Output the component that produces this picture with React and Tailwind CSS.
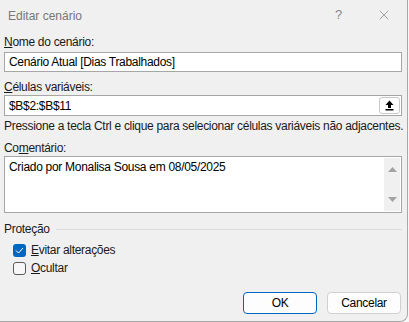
import { X } from 'lucide-react';

const font = { fontFamily: '"Liberation Sans", Arial, sans-serif' };

function Label({ children }) {
  return <div className="h-[16px] leading-[16px] text-[12px] text-[#1a1a1a]">{children}</div>;
}

export default function App() {
  return (
    <div className="w-[409px] h-[322px] bg-[#f7f7f7] overflow-hidden tracking-[-0.3px]" style={font}>
      <div className="w-[408px] h-[322px] bg-[#f0f0f0] border-r border-b border-[#a8a8a8] rounded-br-[8px] flex flex-col">
        {/* title bar */}
        <div className="h-[30px] flex items-center pl-[8px] shrink-0">
          <span className="text-[12px] text-[#777777] flex-1 pt-[1px] tracking-normal">Editar cenário</span>
          <span className="text-[13px] text-[#888888] w-[10px] mr-[31px] font-light">?</span>
          <X size={16} strokeWidth={1} className="text-[#777777] mr-[15px]" />
        </div>

        <div className="px-[4px] pr-[5px] flex flex-col">
          <div className="mt-[4px]">
            <Label><u>N</u>ome do cenário:</Label>
          </div>
          <div className="mt-[2px] h-[20px] bg-white border border-[#a6a6a6] flex items-center px-[4px] text-[12px] text-black">
            Cenário Atual [Dias Trabalhados]
          </div>

          <div className="mt-[7px]">
            <Label><u>C</u>élulas variáveis:</Label>
          </div>
          <div className="h-[21px] bg-white border border-[#a6a6a6] flex items-center pl-[4px] text-[12px] text-black">
            <span className="flex-1">$B$2:$B$11</span>
            <div className="w-[21px] h-[17px] mr-[1px] border border-[#c8c8c8] rounded-[3px] bg-white flex items-center justify-center">
              <svg width="9" height="11" viewBox="0 0 9 11">
                <path d="M4.5 0.5 L8.5 5 L6 5 L6 8 L3 8 L3 5 L0.5 5 Z" fill="#000" />
                <rect x="0.5" y="9" width="8" height="1.5" fill="#000" />
              </svg>
            </div>
          </div>

          <div className="mt-[2px] h-[16px] leading-[16px] text-[12px] text-[#1a1a1a] whitespace-nowrap">
            Pressione a tecla Ctrl e clique para selecionar células variáveis não adjacentes.
          </div>

          <div className="mt-[6px]">
            <Label>Co<u>m</u>entário:</Label>
          </div>
          <div className="h-[57px] bg-white border border-[#a6a6a6] flex">
            <div className="flex-1 pl-[4px] pt-[2px] text-[12px] leading-[16px] text-black">
              Criado por Monalisa Sousa em 08/05/2025
            </div>
            <div className="w-[16px] my-[1px] mr-[1px] bg-[#f0f0f0] flex flex-col items-center justify-between py-[9px]">
              <svg width="9" height="5" viewBox="0 0 9 5"><path d="M4.5 0 L9 5 L0 5 Z" fill="#a3a3a3" /></svg>
              <svg width="9" height="5" viewBox="0 0 9 5"><path d="M0 0 L9 0 L4.5 5 Z" fill="#a3a3a3" /></svg>
            </div>
          </div>

          <div className="mt-[8px] flex items-center h-[16px]">
            <span className="text-[12px] text-[#1a1a1a] mr-[6px]">Proteção</span>
            <div className="flex-1 h-px bg-[#dcdcdc]" />
          </div>

          <div className="mt-[5px] ml-[9px] flex items-center h-[16px] text-[12px] text-[#1a1a1a]">
            <div className="w-[13px] h-[13px] rounded-[3px] bg-[#0067c0] flex items-center justify-center mr-[5px]">
              <svg width="9" height="7" viewBox="0 0 9 7"><path d="M1 3.5 L3.5 6 L8 1" stroke="#fff" strokeWidth="1" fill="none" /></svg>
            </div>
            <span><u>E</u>vitar alterações</span>
          </div>
          <div className="mt-[2px] ml-[9px] flex items-center h-[16px] text-[12px] text-[#1a1a1a]">
            <div className="w-[13px] h-[13px] rounded-[3px] border border-[#5a5a5a] bg-[#f7f7f7] mr-[5px]" />
            <span><u>O</u>cultar</span>
          </div>

          <div className="mt-[16px] flex justify-end gap-[10px] pr-[1px]">
            <button className="w-[74px] h-[22px] rounded-[4px] border border-[#0067c0] bg-[#fdfdfd] text-[12px] text-black">OK</button>
            <button className="w-[74px] h-[22px] rounded-[4px] border border-[#d0d0d0] bg-[#fdfdfd] text-[12px] text-black">Cancelar</button>
          </div>
        </div>
      </div>
    </div>
  );
}
